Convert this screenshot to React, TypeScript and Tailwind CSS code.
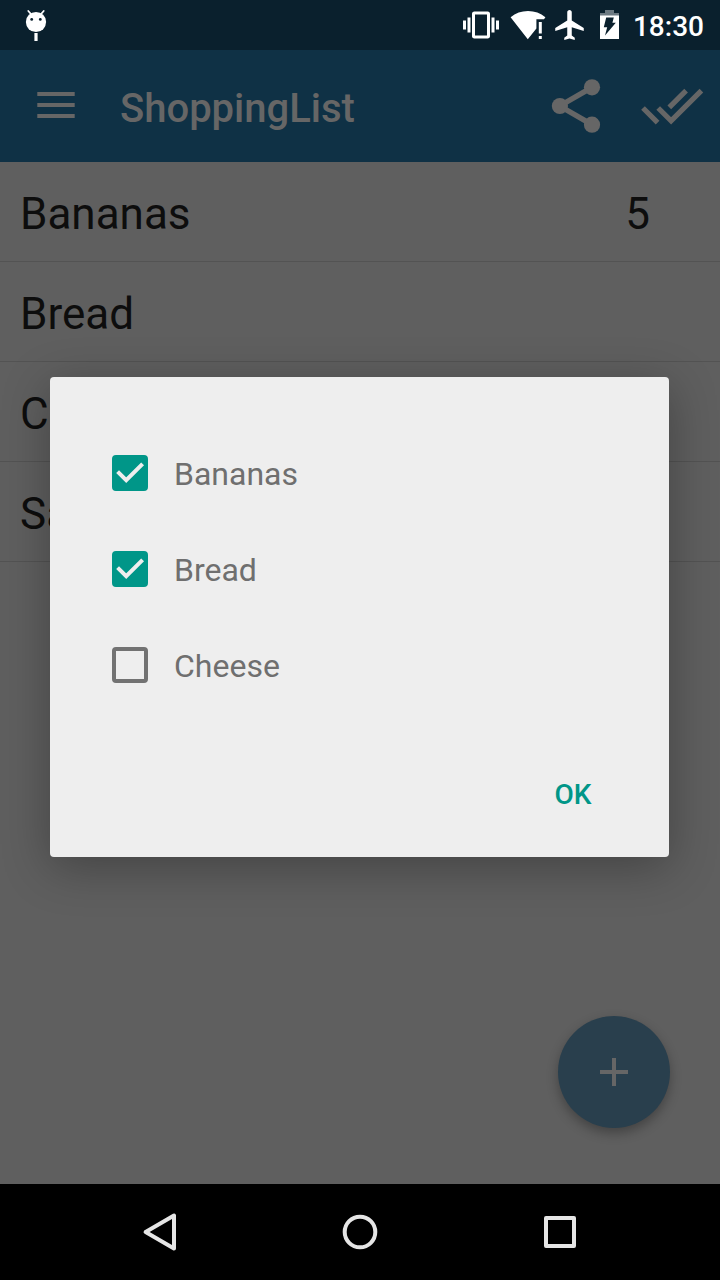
import { useState } from 'react'

type Item = { name: string; quantity?: number }

const items: Item[] = [
  { name: 'Bananas', quantity: 5 },
  { name: 'Bread' },
  { name: 'Cheese' },
  { name: 'Salad' },
]

function StatusBar() {
  return (
    <div className="flex h-[50px] shrink-0 items-center bg-[#0a202d] pr-4 pl-5 text-white">
      <svg width="32" height="50" viewBox="20 0 32 50" fill="white" aria-hidden="true">
        <path d="M28.3 11l3.5 4M43.7 11l-3.5 4" stroke="white" strokeWidth="1.8" strokeLinecap="round" />
        <circle cx="36" cy="22" r="10.1" />
        <circle cx="31.7" cy="19.4" r="1.4" fill="#0a202d" />
        <circle cx="40.3" cy="19.4" r="1.4" fill="#0a202d" />
        <rect x="34.4" y="33" width="3.2" height="8" />
      </svg>
      <div className="ml-auto flex items-center gap-2">
        <svg width="36" height="36" viewBox="0 0 24 24" fill="white" aria-hidden="true">
          <path d="M0 15h2V9H0v6zm3 2h2V7H3v10zm19-8v6h2V9h-2zm-3 8h2V7h-2v10zM16.5 3h-9C6.67 3 6 3.67 6 4.5v15c0 .83.67 1.5 1.5 1.5h9c.83 0 1.5-.67 1.5-1.5v-15c0-.83-.67-1.5-1.5-1.5zM16 19H8V5h8v14z" />
        </svg>
        <svg width="40" height="50" viewBox="507 0 40 50" fill="white" aria-hidden="true">
          <path d="M527.8 39.2L510.6 17.3Q518 11 528 11Q538 11 545.4 17.3L544 19.2H536.4V28.4Z" />
          <path d="M538.8 22h3v11.4h-3zM538.8 36h3v3h-3z" />
        </svg>
        <svg width="29" height="30" viewBox="2 2 19 20" fill="white" aria-hidden="true">
          <path d="M21 16v-2l-8-5V3.5c0-.83-.67-1.5-1.5-1.5S10 2.67 10 3.5V9l-8 5v2l8-2.5V19l-2 1.5V22l3.5-1 3.5 1v-1.5L13 19v-5.5l8 2.5z" />
        </svg>
        <svg width="33" height="50" viewBox="592 0 33 50" aria-hidden="true">
          <path d="M605 10h9v3h5v3h-19v-3h5z" fill="#6c7981" />
          <path d="M600 15.5h19v23.5h-19z" fill="white" />
          <path d="M606.2 17.6h7.6l-1.4 5.2h3.4l-10.8 12.8 2.2-8.4h-3.4z" fill="#0a202d" />
        </svg>
        <span className="pt-[3px] text-[28px] leading-8 font-medium">18:30</span>
      </div>
    </div>
  )
}

function AppBar() {
  return (
    <header className="flex h-28 items-center bg-[#0f3145] pr-3 pl-8 text-[#666666]">
      <button type="button" aria-label="Menu">
        <svg width="48" height="48" viewBox="32 82 48 48" fill="currentColor" aria-hidden="true">
          <path d="M37.3 92h37.4v4H37.3zM37.3 103h37.4v4H37.3zM37.3 114h37.4v4H37.3z" />
        </svg>
      </button>
      <h1 className="ml-10 pt-[6px] text-[40px] leading-[48px] font-medium">ShoppingList</h1>
      <button type="button" aria-label="Share" className="ml-auto">
        <svg width="60" height="60" viewBox="546 76 60 60" fill="currentColor" aria-hidden="true">
          <path d="M592 87.3L559.7 106L592 124.7" fill="none" stroke="currentColor" strokeWidth="5.4" />
          <circle cx="592" cy="87.3" r="8.1" />
          <circle cx="559.9" cy="106" r="8.1" />
          <circle cx="592" cy="124.7" r="8.1" />
        </svg>
      </button>
      <button type="button" aria-label="Mark all as done" className="ml-8">
        <svg width="70" height="60" viewBox="638 76 70 60" fill="none" stroke="currentColor" strokeWidth="5.2" aria-hidden="true">
          <path d="M643 108l14.6 14.6M658.2 108l12.9 12.9L701.4 90.6M669.3 107.4L686.1 90.6" />
        </svg>
      </button>
    </header>
  )
}

function CheckRow({ label, initial }: { label: string; initial: boolean }) {
  const [checked, setChecked] = useState(initial)
  return (
    <label className="flex h-24 items-center gap-[26px] text-[32px] leading-10 text-[#6f6f6f]">
      <span className="grid">
        <input
          type="checkbox"
          checked={checked}
          onChange={(e) => setChecked(e.target.checked)}
          className="peer col-start-1 row-start-1 size-9 appearance-none rounded border-4 border-[#727272] checked:border-[#009688] checked:bg-[#009688]"
        />
        <svg
          viewBox="0 0 36 36"
          className="pointer-events-none invisible col-start-1 row-start-1 size-9 peer-checked:visible"
          fill="none"
          stroke="#eeeeee"
          strokeWidth="4"
          aria-hidden="true"
        >
          <path d="M5.6 16.6l8.6 8.6L30.6 8.8" />
        </svg>
      </span>
      <span className="pt-[2px]">{label}</span>
    </label>
  )
}

function NavBar() {
  return (
    <nav className="flex h-24 shrink-0 items-center justify-center bg-black px-[60px]">
      <button type="button" aria-label="Back" className="flex flex-1 justify-center">
        <svg width="48" height="48" viewBox="136 1208 48 48" fill="none" stroke="#e6e6e6" strokeWidth="4" strokeLinejoin="round" aria-hidden="true">
          <path d="M174 1215.6v32.8L145.6 1232z" />
        </svg>
      </button>
      <button type="button" aria-label="Home" className="flex flex-1 justify-center">
        <svg width="48" height="48" viewBox="0 0 48 48" fill="none" stroke="#e6e6e6" strokeWidth="4" aria-hidden="true">
          <circle cx="24" cy="24" r="15.3" />
        </svg>
      </button>
      <button type="button" aria-label="Recent apps" className="flex flex-1 justify-center">
        <svg width="48" height="48" viewBox="0 0 48 48" fill="none" stroke="#e6e6e6" strokeWidth="4" strokeLinejoin="round" aria-hidden="true">
          <rect x="10" y="10" width="28" height="28" />
        </svg>
      </button>
    </nav>
  )
}

export default function App() {
  return (
    <div className="flex min-h-screen flex-col bg-[#5f5f5f] font-['Roboto',sans-serif]">
      <StatusBar />
      <div className="relative flex flex-1 flex-col">
        <AppBar />
        <ul className="text-[44px] leading-[52px] text-[#0d0d0d]">
          {items.map((item) => (
            <li key={item.name} className="flex h-[100px] items-center border-b border-[#535353] pt-1 pr-[70px] pl-5">
              <span>{item.name}</span>
              <span className="ml-auto">{item.quantity}</span>
            </li>
          ))}
        </ul>
        <button
          type="button"
          aria-label="Add item"
          className="absolute right-[50px] bottom-14 flex size-28 items-center justify-center rounded-full bg-[#293f4d] shadow-[0_5px_12px_rgba(0,0,0,0.3)]"
        >
          <svg width="28" height="28" viewBox="0 0 28 28" fill="#666666" aria-hidden="true">
            <path d="M12 0h4v12h12v4H16v12h-4V16H0v-4h12z" />
          </svg>
        </button>
        <div className="absolute inset-0 flex items-center pr-[51px] pl-[50px]">
          <div
            role="dialog"
            aria-modal="true"
            aria-label="Choose items"
            className="flex w-full flex-col rounded bg-[#eeeeee] px-8 pt-12 pb-[26px] shadow-[0_10px_48px_rgba(0,0,0,0.3)]"
          >
            <div className="px-[30px]">
              <CheckRow label="Bananas" initial={true} />
              <CheckRow label="Bread" initial={true} />
              <CheckRow label="Cheese" initial={false} />
            </div>
            <button type="button" className="mt-[46px] h-[72px] w-32 self-end text-[28px] leading-8 font-medium text-[#009688]">
              OK
            </button>
          </div>
        </div>
      </div>
      <NavBar />
    </div>
  )
}
